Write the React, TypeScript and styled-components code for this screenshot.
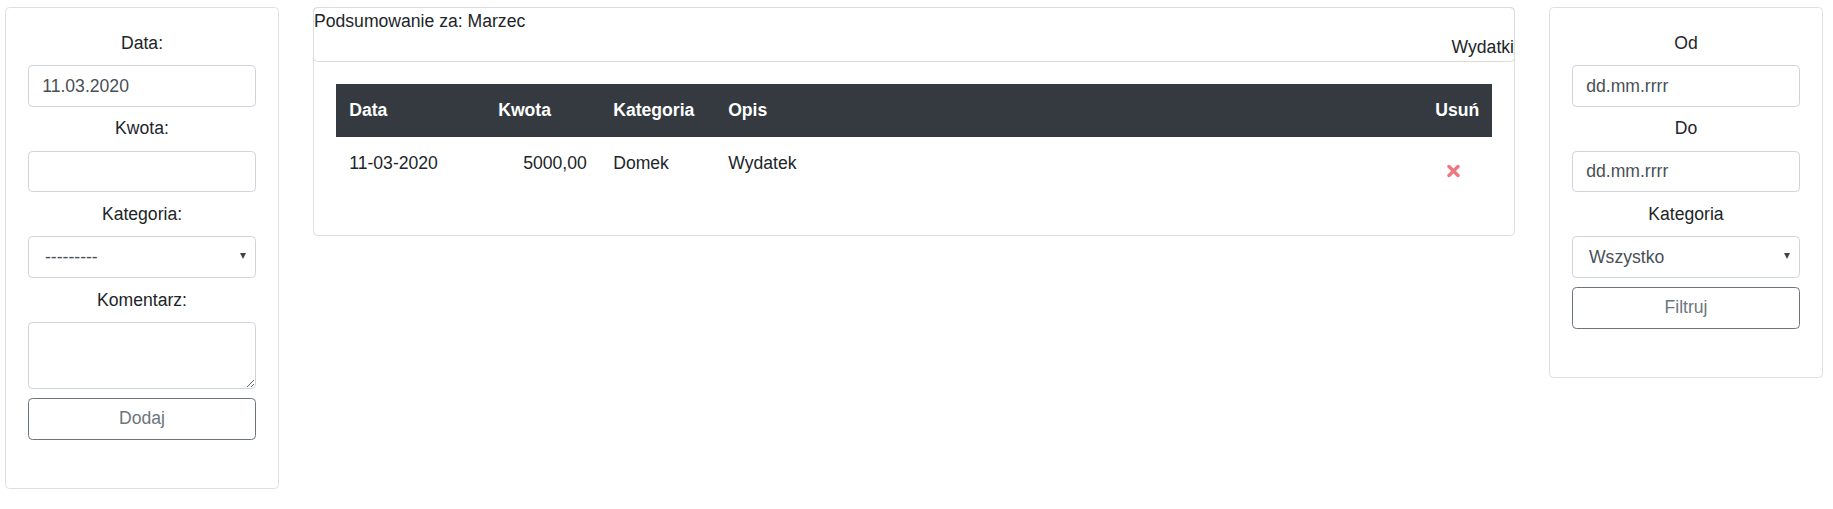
import React from "react";
import styled, { createGlobalStyle } from "styled-components";

const GlobalStyle = createGlobalStyle`
  *, *::before, *::after { box-sizing: border-box; }
  body {
    margin: 0;
    background: #fff;
    font-family: "Liberation Sans", Arial, sans-serif;
    font-size: 17.6px;
    line-height: 1.5;
    color: #212529;
  }
`;

const Page = styled.div`
  display: grid;
  grid-template-columns: 274px 1fr 274px;
  column-gap: 34px;
  align-items: start;
  padding: 7px 10px 0 5px;
`;

const SideCard = styled.div<{ $bottom: number }>`
  border: 1px solid #dfdfdf;
  border-radius: 4.4px;
  padding: 22px 22px ${(p) => p.$bottom}px;
  display: flex;
  flex-direction: column;
`;

const Label = styled.label`
  display: block;
  text-align: center;
  line-height: 26.4px;
  margin-bottom: 8.8px;
`;

const fieldBase = `
  display: block;
  width: 100%;
  height: 41.8px;
  margin: 0 0 8.4px;
  padding: 0 13.2px;
  font-family: "Liberation Sans", Arial, sans-serif;
  font-size: 17.6px;
  color: #495057;
  background: #fff;
  border: 1px solid #ced4da;
  border-radius: 4.4px;
  outline: none;
`;

const TextInput = styled.input`
  ${fieldBase}
`;

const TextArea = styled.textarea`
  ${fieldBase}
  height: 67px;
  padding: 6px 13.2px;
  resize: vertical;
  margin-bottom: 9px;
`;

const SelectWrap = styled.div`
  position: relative;
  &::after {
    content: "";
    position: absolute;
    right: 10px;
    top: 17px;
    border-left: 3.5px solid transparent;
    border-right: 3.5px solid transparent;
    border-top: 6px solid #444;
    pointer-events: none;
  }
`;

const Select = styled.select`
  ${fieldBase}
  appearance: none;
  -webkit-appearance: none;
  padding-left: 16px;
  margin-bottom: 8.8px;
`;

const OutlineButton = styled.button`
  display: block;
  width: 100%;
  height: 42px;
  font-family: "Liberation Sans", Arial, sans-serif;
  font-size: 17.6px;
  color: #6c757d;
  background: transparent;
  border: 1px solid #6c757d;
  border-radius: 4.4px;
  cursor: pointer;
`;

const MainCard = styled.div`
  border: 1px solid #dfdfdf;
  border-radius: 4.4px;
`;

const SummaryHeader = styled.div`
  margin: -1px -1px 0;
  border: 1px solid #dcdcdc;
  border-radius: 4.4px;
  line-height: 26.4px;
`;

const HeaderLine = styled.div<{ $align?: string }>`
  text-align: ${(p) => p.$align || "left"};
  min-height: 26.4px;
`;

const MainBody = styled.div`
  padding: 22px;
`;

const Table = styled.table`
  width: 100%;
  border-collapse: collapse;
  table-layout: fixed;
  margin-bottom: 17.6px;
`;

const Th = styled.th<{ $w?: number }>`
  ${(p) => (p.$w ? `width: ${p.$w}px;` : "")}
  background: #343a40;
  color: #fff;
  font-weight: bold;
  text-align: left;
  padding: 13.2px;
  line-height: 26.4px;
  vertical-align: bottom;
`;

const Td = styled.td<{ $align?: string }>`
  padding: 13.2px;
  line-height: 26.4px;
  vertical-align: top;
  text-align: ${(p) => p.$align || "left"};
`;

const DeleteButton = styled.button`
  display: block;
  height: 32.4px;
  padding: 10px 0 0 12px;
  margin: 0;
  border: 0;
  background: transparent;
  cursor: pointer;
  line-height: 0;
`;

const CrossIcon = () => (
  <svg width="13" height="14" viewBox="0 0 13 14">
    <path
      d="M2 2.5 L11 11.5 M11 2.5 L2 11.5"
      stroke="#ee7882"
      strokeWidth="3.4"
      strokeLinecap="round"
      fill="none"
    />
  </svg>
);

export default function App() {
  return (
    <>
      <GlobalStyle />
      <Page>
        <SideCard $bottom={48}>
          <Label>Data:</Label>
          <TextInput defaultValue="11.03.2020" />
          <Label>Kwota:</Label>
          <TextInput defaultValue="" />
          <Label>Kategoria:</Label>
          <SelectWrap>
            <Select defaultValue="none">
              <option value="none">---------</option>
              <option value="domek">Domek</option>
            </Select>
          </SelectWrap>
          <Label>Komentarz:</Label>
          <TextArea />
          <OutlineButton>Dodaj</OutlineButton>
        </SideCard>

        <MainCard>
          <SummaryHeader>
            <HeaderLine>Podsumowanie za: Marzec</HeaderLine>
            <HeaderLine $align="right">Wydatki</HeaderLine>
          </SummaryHeader>
          <MainBody>
            <Table>
              <thead>
                <tr>
                  <Th $w={149}>Data</Th>
                  <Th $w={115}>Kwota</Th>
                  <Th $w={115}>Kategoria</Th>
                  <Th>Opis</Th>
                  <Th $w={70}>Usuń</Th>
                </tr>
              </thead>
              <tbody>
                <tr>
                  <Td>11-03-2020</Td>
                  <Td $align="right">5000,00</Td>
                  <Td>Domek</Td>
                  <Td>Wydatek</Td>
                  <Td>
                    <DeleteButton aria-label="Usuń">
                      <CrossIcon />
                    </DeleteButton>
                  </Td>
                </tr>
              </tbody>
            </Table>
          </MainBody>
        </MainCard>

        <SideCard $bottom={48}>
          <Label>Od</Label>
          <TextInput defaultValue="dd.mm.rrrr" />
          <Label>Do</Label>
          <TextInput defaultValue="dd.mm.rrrr" />
          <Label>Kategoria</Label>
          <SelectWrap>
            <Select defaultValue="all">
              <option value="all">Wszystko</option>
              <option value="domek">Domek</option>
            </Select>
          </SelectWrap>
          <OutlineButton>Filtruj</OutlineButton>
        </SideCard>
      </Page>
    </>
  );
}
